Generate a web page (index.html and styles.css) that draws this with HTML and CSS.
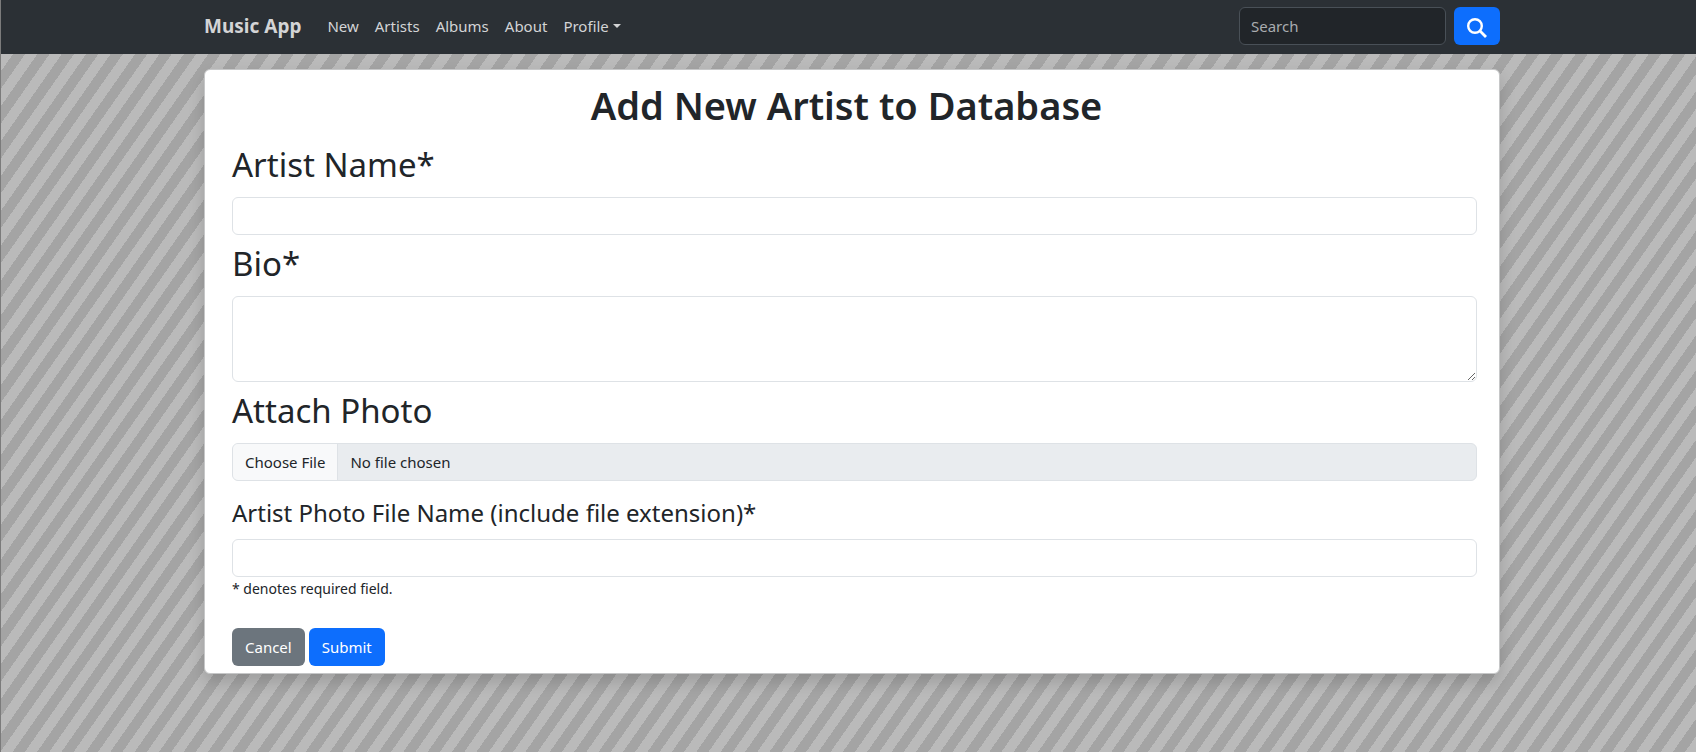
FILE: index.html
```html
<!DOCTYPE html>
<html lang="en">
<head>
<meta charset="utf-8">
<meta name="viewport" content="width=device-width, initial-scale=1">
<title>Music App</title>
<link rel="stylesheet" href="styles.css">
</head>
<body>
<nav class="navbar">
  <div class="container navbar-inner">
    <a class="brand" href="#">Music App</a>
    <ul class="nav-list">
      <li><a class="nav-link" href="#">New</a></li>
      <li><a class="nav-link" href="#">Artists</a></li>
      <li><a class="nav-link" href="#">Albums</a></li>
      <li><a class="nav-link" href="#">About</a></li>
      <li><a class="nav-link dropdown" href="#">Profile</a></li>
    </ul>
    <form class="search" role="search">
      <input class="control search-input" type="search" placeholder="Search" aria-label="Search">
      <button class="btn btn-primary btn-search" type="submit" aria-label="Submit search">
        <svg class="search-icon" viewBox="0 0 20 20" fill="none" stroke="currentColor" stroke-width="2.4" aria-hidden="true">
          <circle cx="8" cy="8" r="6.8"/>
          <path d="M12.8 12.8 19 19" stroke-width="2.8"/>
        </svg>
      </button>
    </form>
  </div>
</nav>
<main class="container">
  <form class="card">
    <h1 class="title">Add New Artist to Database</h1>
    <label class="label" for="name">Artist Name*</label>
    <input class="control" id="name" type="text">
    <label class="label" for="bio">Bio*</label>
    <textarea class="control bio" id="bio" rows="3"></textarea>
    <label class="label" for="photo">Attach Photo</label>
    <input class="control file" id="photo" type="file">
    <label class="label label-small" for="filename">Artist Photo File Name (include file extension)*</label>
    <input class="control" id="filename" type="text">
    <p class="note">* denotes required field.</p>
    <div class="actions">
      <button class="btn btn-secondary" type="button">Cancel</button>
      <button class="btn btn-primary" type="submit">Submit</button>
    </div>
  </form>
</main>
</body>
</html>
```
FILE: styles.css
```css
*, *::before, *::after {
  box-sizing: border-box;
}

body {
  margin: 0;
  min-height: 100vh;
  border-left: 1px solid #7b7b7b;
  color: #212529;
  font: 15px/24px "Noto Sans", "Open Sans", sans-serif;
}

html {
  background: repeating-linear-gradient(-55deg, #bababa 0 9px, #a4a4a4 9px 19px, #bababa 19px 20px);
}

.container {
  width: 100%;
  max-width: 1303px;
  margin: 0 auto;
  padding-left: 7px;
}

.navbar {
  padding: 7px 0 9px;
  background: #2b3035;
}

.navbar-inner {
  display: flex;
  align-items: center;
}

.brand {
  margin-right: 26px;
  color: #d3d4d5;
  font-size: 19px;
  font-weight: 700;
  text-decoration: none;
}

.nav-list {
  display: flex;
  flex: 1;
  gap: 16px;
  margin: 0;
  padding: 0;
  list-style: none;
}

.nav-link {
  color: #d3d4d5;
  text-decoration: none;
}

.dropdown::after {
  content: "";
  display: inline-block;
  margin-left: 4px;
  vertical-align: 4px;
  border: 4px solid transparent;
  border-top-color: currentColor;
  border-bottom: 0;
}

.search {
  display: flex;
  gap: 8px;
}

.control {
  display: block;
  width: 100%;
  height: 38px;
  padding: 6px 12px;
  border: 1px solid #dee2e6;
  border-radius: 6px;
  background: #fff;
  color: #212529;
  font: inherit;
}

.search-input {
  width: 207px;
  padding: 6px 11px;
  border-color: #495057;
  background: #212529;
  color: #dee2e6;
}

.search-input::placeholder {
  color: #a9acaf;
}

.btn {
  height: 38px;
  padding: 6px 13px;
  border: 0;
  border-radius: 6px;
  color: #fff;
  font: inherit;
}

.btn-search {
  padding: 6px 12px;
}

.btn-primary {
  background: #0d6efd;
}

.btn-secondary {
  background: #6c757d;
}

.search-icon {
  display: block;
  width: 22px;
  height: 20px;
  margin-top: 4px;
}

.card {
  margin: 15px 0 24px;
  padding: 8px 22px 7px 27px;
  border: 1px solid #c6c7c8;
  border-radius: 6px;
  background: #fff;
  box-shadow: 0 8px 16px rgba(0, 0, 0, 0.15);
}

.title {
  margin: 3px 0 7px;
  padding-right: 16px;
  font-size: 38px;
  font-weight: 600;
  line-height: 48px;
  text-align: center;
}

.label {
  display: block;
  padding-bottom: 3px;
  font-size: 33px;
  line-height: 58px;
}

.label-small {
  padding: 12px 0 6px;
  font-size: 24px;
  line-height: 40px;
}

.bio {
  height: 86px;
  resize: vertical;
}

.file {
  overflow: hidden;
  background: #e9ecef;
}

.file::file-selector-button {
  margin: -6px 12px -6px -12px;
  padding: 6px 12px;
  border: 0;
  border-right: 1px solid #dee2e6;
  background: #f8f9fa;
  color: #212529;
  font: inherit;
}

.note {
  margin: 0;
  font-size: 14px;
}

.actions {
  display: flex;
  gap: 4px;
  padding-top: 27px;
}
```
